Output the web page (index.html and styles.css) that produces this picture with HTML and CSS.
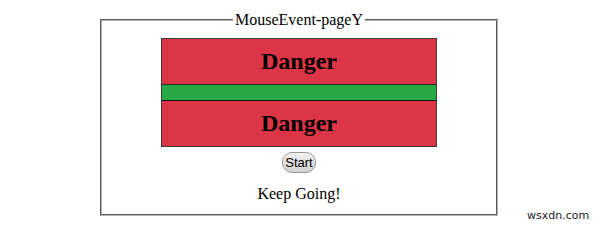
FILE: index.html
```html
<!DOCTYPE html>
<html>
<head>
<meta charset="utf-8">
<link rel="stylesheet" href="styles.css">
</head>
<body>
<fieldset class="demo">
  <legend class="demo-title">MouseEvent-pageY</legend>
  <div class="zones">
    <div class="zone danger">Danger</div>
    <div class="zone safe"></div>
    <div class="zone danger">Danger</div>
  </div>
  <button class="start">Start</button>
  <p class="status">Keep Going!</p>
</fieldset>
<span class="watermark">wsxdn.com</span>
</body>
</html>
```

FILE: styles.css
```css
html, body {
  margin: 0;
  padding: 0;
  background: #fff;
}
body {
  font-family: "Liberation Serif", "Times New Roman", serif;
  font-size: 16px;
  color: #000;
  width: 600px;
  height: 233px;
  position: relative;
  overflow: hidden;
}
.demo {
  box-sizing: border-box;
  width: 398px;
  margin: 11px 0 0 100px;
  padding: 0 0 11px;
  border: 2px groove #b0b0b0;
  text-align: center;
}
.demo-title {
  margin: 0 auto;
  padding: 0 2px;
  line-height: 18px;
}
.zones {
  width: 276px;
  box-sizing: border-box;
  margin: 9px auto 0;
  border: 1px solid #3a3a3a;
}
.zone {
  font-weight: bold;
  font-size: 24px;
  line-height: 45px;
}
.danger {
  background: #dc3545;
  height: 45px;
}
.safe {
  background: #28a745;
  height: 15px;
  border-top: 1px solid #2a2a2a;
  border-bottom: 1px solid #111;
}
.start {
  margin: 5px 0 0;
  font-family: "Liberation Sans", Arial, sans-serif;
  font-size: 13px;
  height: 21px;
  padding: 0 2px;
  border: 1px solid #9a9a9a;
  border-radius: 10px;
  background: linear-gradient(#f2f2f2, #d0d0d0);
  color: #000;
}
.status {
  margin: 12px 0 0;
  line-height: 18px;
}
.watermark {
  position: absolute;
  left: 527px;
  top: 209px;
  font-family: "DejaVu Sans", Verdana, sans-serif;
  font-size: 11px;
  color: #222;
}
```
